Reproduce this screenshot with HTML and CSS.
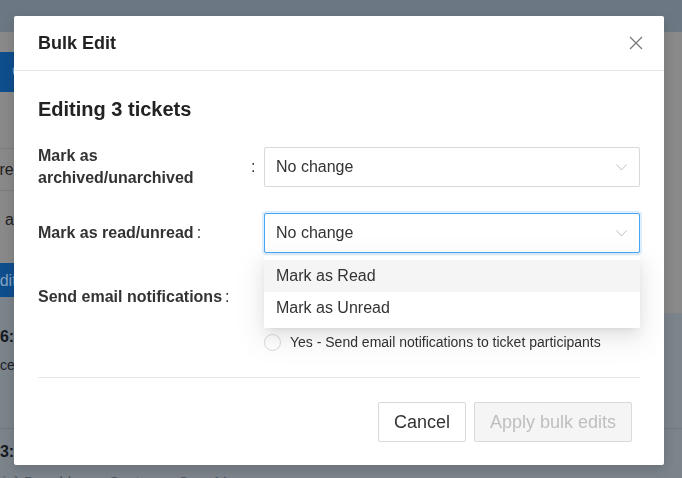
FILE: index.html
```html
<!DOCTYPE html>
<html lang="en">
<head>
<meta charset="utf-8">
<title>Bulk Edit</title>
<link rel="stylesheet" href="styles.css">
</head>
<body>
<div class="app">
  <header class="topbar"></header>
  <div class="main">
    <div class="col col-left">
      <div class="pane-gray">
        <div class="gap-20"></div>
        <div class="btn-bg btn-create"><span>Create ticket</span></div>
        <div class="gap-56"></div>
        <div class="list-row row-a"><span class="clip-share">Share</span></div>
        <div class="list-row row-b"><span class="txt-as">as</span></div>
        <div class="btn-bg btn-edit"><span class="clip-edit">Edit</span></div>
      </div>
      <div class="pane-slate">
        <div class="time"><span class="clip-1">16:30</span></div>
        <div class="sub"><span class="clip-service">Service</span></div>
        <div class="time time-2"><span class="clip-1">13:00</span></div>
        <div class="person"><span class="clip-person">(Jim Liu) Donaldson - Customer Care Manager</span></div>
      </div>
    </div>
    <div class="col col-right">
      <div class="pane-gray pane-gray-r"></div>
      <div class="pane-slate pane-slate-r"><div class="slate-line"></div></div>
    </div>
  </div>
</div>

<div class="overlay">
  <div class="modal">
    <div class="modal-header">
      <div class="modal-title">Bulk Edit</div>
      <svg class="close" width="14" height="14" viewBox="0 0 14 14" aria-label="Close">
        <path d="M1 1 L13 13 M13 1 L1 13" stroke="#7a7a7a" stroke-width="1.3" fill="none"/>
      </svg>
    </div>
    <div class="modal-body">
      <h2 class="heading">Editing 3 tickets</h2>

      <div class="form-item">
        <div class="label"><span class="label-text">Mark as archived/unarchived</span><span class="colon">:</span></div>
        <div class="control">
          <div class="select">
            <span>No change</span>
            <svg class="chev" width="11" height="7" viewBox="0 0 11 7"><path d="M0.5 0.5 L5.5 6 L10.5 0.5" stroke="#bfbfbf" stroke-width="1" fill="none"/></svg>
          </div>
        </div>
      </div>

      <div class="form-item">
        <div class="label"><span class="label-text">Mark as read/unread</span><span class="colon">:</span></div>
        <div class="control">
          <div class="select select-focused">
            <span>No change</span>
            <svg class="chev" width="11" height="7" viewBox="0 0 11 7"><path d="M0.5 0.5 L5.5 6 L10.5 0.5" stroke="#bfbfbf" stroke-width="1" fill="none"/></svg>
          </div>
          <ul class="menu">
            <li class="menu-item active">Mark as Read</li>
            <li class="menu-item">Mark as Unread</li>
          </ul>
        </div>
      </div>

      <div class="form-item form-item-top form-item-last">
        <div class="label label-tall"><span class="label-text">Send email notifications</span><span class="colon">:</span></div>
        <div class="control radios">
          <label class="radio"><span class="radio-dot"></span><span>No - Do not send email notifications</span></label>
          <label class="radio"><span class="radio-dot"></span><span>Yes - Send email notifications to ticket participants</span></label>
        </div>
      </div>

      <div class="divider"></div>

      <div class="footer">
        <button class="btn">Cancel</button>
        <button class="btn btn-disabled" disabled>Apply bulk edits</button>
      </div>
    </div>
  </div>
</div>
</body>
</html>
```

FILE: styles.css
```css
html, body {
  margin: 0;
  padding: 0;
  height: 100%;
  overflow: hidden;
}
body {
  font-family: "Liberation Sans", Arial, sans-serif;
  color: #333;
  background: #7b838b;
}

/* ---------- background page (dimmed) ---------- */
.app {
  height: 478px;
  display: flex;
  flex-direction: column;
}
.topbar {
  height: 32px;
  background: #6b7782;
  flex: none;
}
.main {
  flex: 1;
  display: flex;
}
.col {
  flex: 1;
  display: flex;
  flex-direction: column;
  overflow: hidden;
}
.pane-gray {
  background: #898989;
  height: 265px;
  flex: none;
}
.pane-gray-r {
  height: 281px;
}
.pane-slate {
  flex: 1;
  background: #7b838b;
  overflow: hidden;
}
.pane-slate-r {
  padding-top: 115px;
}
.slate-line {
  border-top: 1px solid #6f777f;
}
.gap-20 { height: 20px; }
.gap-56 { height: 56px; }
.btn-bg {
  background: #0e4e8d;
  width: 120px;
  color: #86a3c2;
  font-size: 16px;
  display: flex;
  align-items: center;
}
.btn-create {
  height: 40px;
  padding-left: 12px;
}
.btn-edit {
  height: 35px;
  margin-top: 14px;
}
.clip-edit { margin-left: -11px; }
.list-row {
  font-size: 16px;
  color: #1e1e1e;
  display: flex;
  align-items: center;
}
.row-a {
  height: 41px;
  border-top: 1px solid #7c7c7c;
  border-bottom: 1px solid #7c7c7c;
}
.row-b {
  height: 58px;
}
.clip-share { margin-left: -29px; }
.txt-as { margin-left: 5px; }
.time {
  font-size: 16px;
  font-weight: bold;
  line-height: 20px;
  color: #15191d;
  margin-top: 30px;
}
.clip-1 { margin-left: -9px; }
.sub {
  font-size: 14px;
  line-height: 20px;
  color: #1d2126;
  margin-top: 8px;
  padding-bottom: 53px;
  border-bottom: 1px solid #6f777f;
}
.clip-service { margin-left: -32px; }
.time-2 { margin-top: 13px; }
.person {
  font-size: 15px;
  line-height: 20px;
  color: #4e565e;
  margin-top: 10px;
  white-space: nowrap;
}
.clip-person { margin-left: -38px; }

/* ---------- modal ---------- */
.overlay {
  position: fixed;
  inset: 0;
  padding: 16px 0 0 14px;
}
.modal {
  width: 650px;
  background: #fff;
  border-radius: 2px;
  box-shadow: 0 4px 12px rgba(0, 0, 0, 0.15);
}
.modal-header {
  height: 54px;
  padding: 0 21px 0 24px;
  display: flex;
  align-items: center;
  justify-content: space-between;
  border-bottom: 1px solid #e8e8e8;
}
.modal-title {
  font-size: 18px;
  line-height: 24px;
  font-weight: bold;
  color: #222;
}
.close { display: block; }
.modal-body {
  padding: 26px 24px 23px 24px;
}
.heading {
  margin: 0 0 24px;
  font-size: 20px;
  line-height: 24px;
  font-weight: bold;
  color: #222;
}
.form-item {
  display: flex;
  align-items: center;
  margin-bottom: 24px;
}
.form-item-top { align-items: flex-start; }
.form-item-last { margin-bottom: 0; }
.label {
  width: 226px;
  flex: none;
  display: flex;
  align-items: center;
  font-size: 16px;
  line-height: 22px;
  font-weight: bold;
  color: #333;
}
.label-tall { line-height: 40px; }
.label-text { max-width: 210px; }
.colon {
  margin-left: 3px;
  font-weight: normal;
  color: #333;
}
.control {
  flex: 1;
  position: relative;
}
.select {
  height: 40px;
  box-sizing: border-box;
  border: 1px solid #d9d9d9;
  border-radius: 2px;
  padding: 0 12px 0 11px;
  display: flex;
  align-items: center;
  justify-content: space-between;
  font-size: 16px;
  color: #333;
  background: #fff;
}
.select-focused {
  border-color: #4aa6f5;
  box-shadow: 0 0 0 2px rgba(24, 144, 255, 0.15);
}
.chev { display: block; }
.menu {
  position: absolute;
  left: 0;
  right: 0;
  top: 100%;
  margin: 3px 0 0;
  padding: 4px 0;
  list-style: none;
  background: #fff;
  border-radius: 2px;
  box-shadow: 0 3px 6px -4px rgba(0, 0, 0, 0.12), 0 6px 16px 0 rgba(0, 0, 0, 0.08), 0 9px 28px 8px rgba(0, 0, 0, 0.05);
  z-index: 2;
}
.menu-item {
  height: 32px;
  line-height: 32px;
  padding: 0 12px;
  font-size: 16px;
  color: #333;
}
.menu-item.active { background: #f5f5f5; }
.radios {
  display: flex;
  flex-direction: column;
  gap: 21px;
  padding-top: 8px;
}
.radio {
  display: flex;
  align-items: center;
  height: 24px;
  font-size: 14px;
  color: #333;
}
.radio-dot {
  width: 17px;
  height: 17px;
  box-sizing: border-box;
  border: 1px solid #d9d9d9;
  border-radius: 50%;
  background: #fff;
  margin-right: 9px;
  flex: none;
}
.divider {
  height: 1px;
  background: #e8e8e8;
  margin: 23px 0 24px;
}
.footer {
  display: flex;
  justify-content: flex-end;
  gap: 8px;
  padding-right: 8px;
}
.btn {
  height: 40px;
  padding: 0 15px;
  border: 1px solid #d9d9d9;
  border-radius: 2px;
  background: #fff;
  font-family: "Liberation Sans", Arial, sans-serif;
  font-size: 18px;
  color: #333;
  cursor: pointer;
}
.btn-disabled {
  background: #f5f5f5;
  color: #bfbfbf;
  cursor: not-allowed;
}
```
